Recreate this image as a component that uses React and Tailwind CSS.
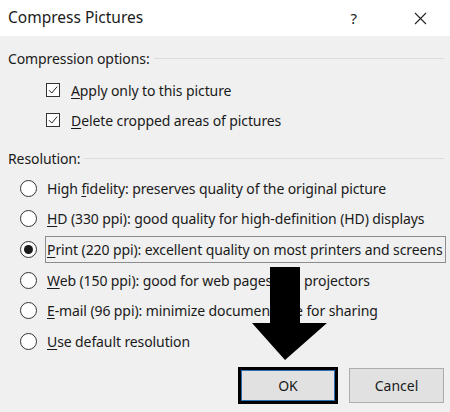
import React from "react"

const font = { fontFamily: '"Noto Sans", "Open Sans", sans-serif' }

function U({ children }) {
  return <span className="underline underline-offset-2 decoration-1">{children}</span>
}

function GroupLabel({ children, className }) {
  return (
    <div className={"flex items-center pl-[8px] pr-[6px] " + className}>
      <span className="text-[14px] tracking-[-0.1px] text-[#1a1a1a] whitespace-nowrap">{children}</span>
      <div className="flex-1 h-px bg-[#dcdcdc] ml-[4px]" />
    </div>
  )
}

function Check({ children }) {
  return (
    <div className="h-[30px] flex items-center pl-[46px]">
      <div className="w-[14px] h-[14px] border border-[#333] bg-white flex items-center justify-center">
        <svg width="12" height="12" viewBox="0 0 12 12">
          <path d="M2 6.2 L4.8 9 L10.2 2.6" fill="none" stroke="#222" strokeWidth="1" />
        </svg>
      </div>
      <span className="ml-[11px] text-[14px] tracking-[-0.1px] text-[#1a1a1a] whitespace-nowrap">{children}</span>
    </div>
  )
}

function Radio({ checked, focused, children }) {
  return (
    <div className="h-[30.6px] flex items-center pl-[20px]">
      <div className="w-[17px] h-[17px] rounded-full border border-[#333] bg-white flex items-center justify-center shrink-0">
        {checked && <div className="w-[9px] h-[9px] rounded-full bg-[#1a1a1a]" />}
      </div>
      <span
        className={
          "ml-[8px] text-[14px] tracking-[-0.1px] text-[#1a1a1a] whitespace-nowrap leading-[25px] pl-[1px] pr-[2px] " +
          (focused ? "border border-[#8c8c8c]" : "border border-transparent")
        }
      >
        {children}
      </span>
    </div>
  )
}

export default function App() {
  return (
    <div className="w-[450px] h-[412px] bg-[#f0f0f0] relative overflow-hidden" style={font}>
      {/* barra de titulo */}
      <div className="h-[36px] bg-white flex items-center pl-[8px]">
        <span className="text-[15.5px] text-[#1a1a1a] flex-1">Compress Pictures</span>
        <span className="text-[15px] text-[#1a1a1a] mr-[57px]">?</span>
        <svg width="13" height="13" viewBox="0 0 13 13" className="mr-[23px]">
          <path d="M1 1 L12 12 M12 1 L1 12" stroke="#222" strokeWidth="1.1" />
        </svg>
      </div>

      <div className="flex flex-col">
        <GroupLabel className="h-[22px] mt-[11px]">Compression options:</GroupLabel>
        <div className="mt-[6px]">
          <Check><U>A</U>pply only to this picture</Check>
          <Check><U>D</U>elete cropped areas of pictures</Check>
        </div>
        <GroupLabel className="h-[22px] mt-[12px]">Resolution:</GroupLabel>
        <div className="mt-[4px]">
          <Radio>High <U>f</U>idelity: preserves quality of the original picture</Radio>
          <Radio><U>H</U>D (330 ppi): good quality for high-definition (HD) displays</Radio>
          <Radio checked focused><U>P</U>rint (220 ppi): excellent quality on most printers and screens</Radio>
          <Radio><U>W</U>eb (150 ppi): good for web pages and projectors</Radio>
          <Radio><U>E</U>-mail (96 ppi): minimize document size for sharing</Radio>
          <Radio><U>U</U>se default resolution</Radio>
        </div>

        {/* botones */}
        <div className="flex justify-end gap-[11px] pr-[6px] mt-[10px]">
          <button className="w-[100px] h-[37px] border-[3px] border-black bg-[#e1e1e1] flex items-center justify-center">
            <div className="w-full h-full border border-[#2f6fb3] flex items-center justify-center text-[14px] text-[#1a1a1a]">
              OK
            </div>
          </button>
          <button className="w-[95px] h-[35px] mt-[1px] border border-[#adadad] bg-[#e1e1e1] text-[14px] text-[#1a1a1a]">
            Cancel
          </button>
        </div>
      </div>

      {/* flecha negra encima */}
      <svg className="absolute left-[252px] top-[267px]" width="76" height="94" viewBox="0 0 76 94">
        <polygon points="18,0 48,0 48,56 75,56 33,93 0,56 18,56" fill="#000" />
      </svg>
    </div>
  )
}
